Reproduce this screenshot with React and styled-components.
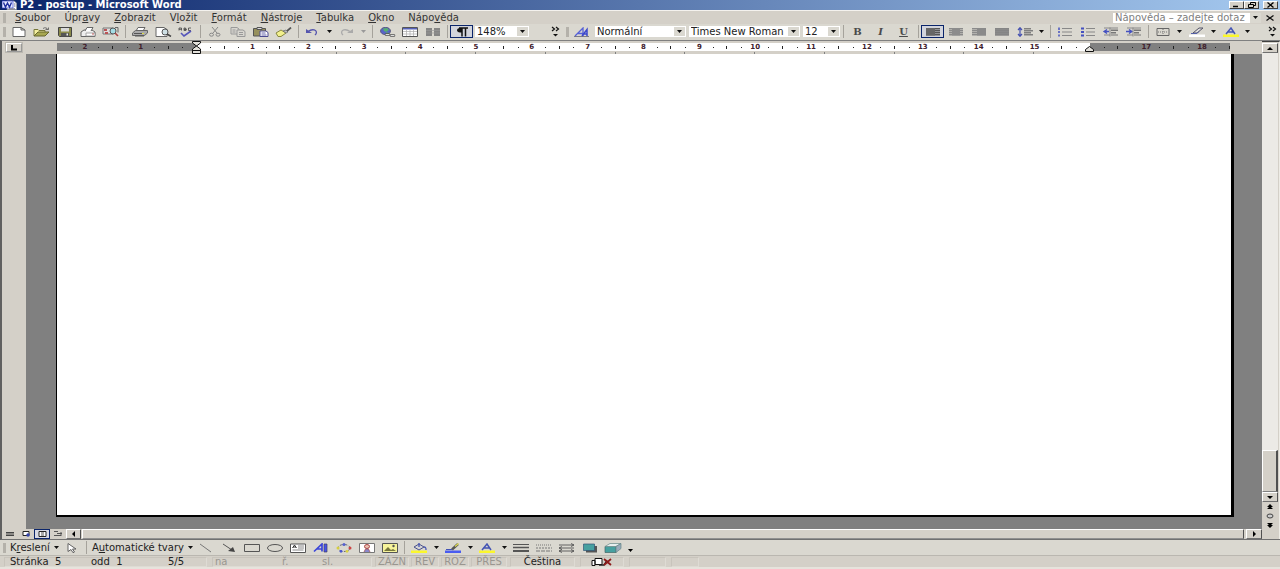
import React from "react";
import styled, { createGlobalStyle, css } from "styled-components";

const face = "#d4d0c8";
const light = "#f4f2ee";
const shade = "#808080";
const bar = "#dad8d0";

const GlobalStyle = createGlobalStyle`
  *, *::before, *::after { box-sizing: border-box; }
  body { margin: 0; background: ${face}; }
  body, button, input, select {
    font: 10px/12px "DejaVu Sans", Verdana, sans-serif;
    color: #222;
  }
  svg { display: block; flex: none; }
`;

const Window = styled.div`
  display: flex;
  flex-direction: column;
  min-height: 100vh;
  overflow: hidden;
`;

const Plain = styled.button`
  display: flex;
  align-items: center;
  justify-content: center;
  flex: none;
  margin: 0;
  padding: 0;
  border: 0;
  background: none;
  white-space: nowrap;
`;

/* Title bar */
const TitleBar = styled.header`
  display: flex;
  align-items: center;
  height: 10px;
  padding: 0 2px;
  background: linear-gradient(90deg, #0a246a, #a6caf0);
`;
const Title = styled.h1`
  margin: 0 auto 0 3px;
  font-size: 10px;
  line-height: 10px;
  font-weight: bold;
  color: #fff;
`;
const WindowButton = styled(Plain)`
  width: 15px;
  height: 8px;
  margin-left: ${(p) => (p.$apart ? 4 : 0)}px;
  background: ${face};
  border: 1px solid;
  border-color: #fff #404040 #404040 #fff;
`;

/* Menu */
const MenuBar = styled.nav`
  display: flex;
  align-items: center;
  height: 14px;
  padding: 0 2px 0 3px;
  border-top: 1px solid ${light};
`;
const Grip = styled.span`
  flex: none;
  width: 3px;
  height: 10px;
  background: #b4b1aa;
`;
const MenuItem = styled(Plain)`
  padding: 0 7px;
  color: #333;
  &:first-of-type { margin-left: 2px; }
`;
const HelpBox = styled.div`
  display: flex;
  align-items: center;
  width: 148px;
  height: 10px;
  margin-left: auto;
  background: #fff;
`;
const HelpInput = styled.input`
  flex: 1;
  min-width: 0;
  height: 10px;
  padding: 0 2px;
  border: 0;
  background: none;
  line-height: 10px;
  &::placeholder { color: #808080; opacity: 1; }
`;
const HelpArrow = styled(Plain)`
  width: 11px;
  height: 10px;
  background: ${bar};
`;
const CloseDocument = styled(Plain)`
  width: 17px;
  height: 12px;
`;

/* Toolbars */
const Toolbars = styled.div`
  display: flex;
  height: 16px;
  background: ${bar};
`;
const Toolbar = styled.div`
  display: flex;
  align-items: center;
  flex: ${(p) => (p.$fill ? 1 : "none")};
  min-width: 0;
  height: 15px;
  padding: 0 2px 0 3px;
  background: ${bar};
`;
const ToolButton = styled(Plain)`
  width: 23px;
  height: 13px;
  ${(p) => p.$pressed && css`
    border: 1px solid #0a246a;
    background: #d2d4dc;
  `}
  ${Grip} + & { margin-left: 1px; }
`;
const ArrowButton = styled(Plain)`
  width: 11px;
  height: 13px;
`;
const MoreButton = styled(Plain)`
  width: 12px;
  height: 14px;
  margin-left: ${(p) => (p.$end ? "auto" : "20px")};
`;
const TextButton = styled(Plain)`
  padding: 0 2px;
  gap: 4px;
  ${Grip} + & { margin-left: 2px; }
`;
const FontStyle = styled.span`
  font: 10px/12px "DejaVu Serif", serif;
  font-weight: bold;
  font-style: ${(p) => (p.$italic ? "italic" : "normal")};
  text-decoration: ${(p) => (p.$underline ? "underline" : "none")};
  color: #4a4a4a;
`;
const Separator = styled.span`
  flex: none;
  width: 6px;
  height: 13px;
  background: linear-gradient(#a5a29b, #a5a29b) center / 1px 100% no-repeat;
`;
const Combo = styled.div`
  position: relative;
  flex: none;
  width: ${(p) => p.$width}px;
  height: 11px;
  margin-left: ${(p) => (p.$first ? 2 : 3)}px;
  background: #fff;
`;
const ComboSelect = styled.select`
  display: block;
  width: 100%;
  height: 11px;
  padding: 0 0 0 2px;
  border: 0;
  background: none;
  appearance: none;
  line-height: 11px;
`;
const ComboArrow = styled.span`
  position: absolute;
  top: 1px;
  right: 1px;
  bottom: 1px;
  display: flex;
  align-items: center;
  justify-content: center;
  width: 11px;
  background: ${bar};
  pointer-events: none;
`;

/* Work area */
const WorkArea = styled.main`
  display: flex;
  flex: 1;
  border-top: 1px solid ${shade};
  border-left: 2px solid #606060;
  border-bottom: 1px solid #707070;
`;
const Editor = styled.div`
  display: flex;
  flex-direction: column;
  flex: 1;
  min-width: 0;
`;
const RulerRow = styled.div`
  display: flex;
  align-items: flex-start;
  height: 13px;
  padding: 2px 32px 0 4px;
`;
const TabButton = styled(Plain)`
  width: 16px;
  height: 9px;
  margin-right: 35px;
  border: 1px solid;
  border-color: #fff #999 #999 #fff;
  outline: 1px solid #bbb8b0;
`;
const Ruler = styled.div`
  position: relative;
  display: flex;
  flex: 1;
  height: 8px;
  background: linear-gradient(90deg, ${shade} 11.9%, #fff 11.9%, #fff 88.1%, ${shade} 88.1%);
  &::after {
    content: "";
    position: absolute;
    top: 9px;
    left: 11.9%;
    right: 11.9%;
    height: 2px;
    background: repeating-linear-gradient(90deg, transparent 0 calc(7.8125% - 1px), ${shade} calc(7.8125% - 1px) 7.8125%);
  }
`;
const RulerUnit = styled.span`
  flex: 1;
  min-width: 0;
  text-align: center;
  font-size: 7px;
  line-height: 8px;
  font-weight: bold;
  color: #40202c;
  background:
    linear-gradient(#222, #222) 25% 4px / 1px 1px no-repeat,
    linear-gradient(#222, #222) 75% 4px / 1px 1px no-repeat,
    linear-gradient(#222, #222) 100% 3px / 1px 3px no-repeat;
`;
const IndentMarker = styled.span`
  position: absolute;
  top: ${(p) => p.$top}px;
  left: ${(p) => p.$at}%;
  margin-left: -5px;
`;
const Canvas = styled.div`
  display: flex;
  flex: 1;
  background: ${shade};
`;
const SideRuler = styled.div`
  width: 24px;
  background: ${face};
`;
const Page = styled.article`
  flex: 1;
  margin: 0 28px 12px 30px;
  background: #fff;
  border: solid #000;
  border-width: 0 3px 2px 1px;
`;
const BottomRow = styled.div`
  display: flex;
  height: 10px;
  background: ${face};
`;
const ViewButton = styled(Plain)`
  width: 16px;
  height: 10px;
  ${(p) => p.$pressed && css`
    border: 1px solid #0a246a;
    background: #d8dae4;
  `}
`;
const ScrollButton = styled(Plain)`
  width: ${(p) => (p.$wide ? 16 : 15)}px;
  height: 10px;
  border: 1px solid;
  border-color: #fff #505050 #707070 #fff;
  background: ${face};
`;
const HorizontalThumb = styled.div`
  flex: 1;
  margin: 0 2px 0 1px;
  border: 1px solid;
  border-color: #fff #505050 #909090 #fff;
  background: ${face};
`;
const VerticalScroll = styled.aside`
  display: flex;
  flex-direction: column;
  flex: none;
  width: 18px;
  padding: 1px 1px 10px 0;
  border-right: 1px solid #eeece6;
  background: ${face};
  border-top: 1px solid #404040;
`;
const Track = styled.div`
  display: flex;
  flex: 1;
  background: #eceae6;
`;
const VerticalThumb = styled.div`
  align-self: flex-end;
  width: 100%;
  height: 42px;
  border: 1px solid;
  border-color: #fff #505050 #808080 #fff;
  border-right-width: 2px;
  background: ${face};
`;
const BrowseButton = styled(Plain)`
  width: 16px;
  height: 9px;
`;

/* Status bar */
const StatusBar = styled.footer`
  display: flex;
  align-items: center;
  height: 14px;
  padding: 0 4px;
  border-top: 1px solid #bab7b0;
  border-bottom: 2px solid #e6e3dc;
`;
const StatusField = styled.div`
  display: flex;
  align-items: center;
  justify-content: ${(p) => (p.$start ? "flex-start" : "center")};
  flex: none;
  width: ${(p) => p.$width}px;
  height: 10px;
  margin-right: ${(p) => p.$after || 2}px;
  padding-left: ${(p) => p.$start || 0}px;
  border: 1px solid;
  border-color: #c8c4bc #dedbd4 #dedbd4 #c8c4bc;
  color: ${(p) => (p.$off ? "#999690" : "#222")};
  white-space: pre;
`;
const StatusPart = styled.span`
  flex: none;
  width: ${(p) => p.$width}px;
`;

const Caret = ({ color = "#111" }) => (
  <svg width="5" height="3" viewBox="0 0 5 3"><path d="M0 0h5L2.5 3z" fill={color} /></svg>
);
const Point = ({ d }) => (
  <svg width="8" height="6" viewBox="0 0 8 6"><path d={d} fill="#000" /></svg>
);
const More = () => (
  <svg width="9" height="11" viewBox="0 0 9 11">
    <path d="M1 1l2.5 2L1 5M5 1l2.5 2L5 5" fill="none" stroke="#111" strokeWidth="1.2" />
    <path d="M2 8h5L4.500 10.500z" fill="#111" />
  </svg>
);

const g = "#666";
const rows = (color, list) => (
  <g fill={color}>{list.map(([x, w], i) => <rect key={i} x={x} y={1 + i * 2} width={w} height="1.5" />)}</g>
);

const art = {
  new: <path d="M3 .5h8l4 2.500v6.500H3zM11 .5V3h4" fill="#fff" stroke={g} />,
  open: <><path d="M1 9V2.500h4l1 1h6V5" fill="#f4f0a0" stroke="#77773a" /><path d="M1 9l4-4h11l-4 4z" fill="#a8a850" stroke="#66662c" /><path d="M10 1.500c2-1.500 4-.5 5 1m.5-2v2h-3" fill="none" stroke="#555" strokeWidth=".8" /></>,
  save: <><path d="M2.500.5h13v9h-12l-1-1z" fill="#8a8a4a" stroke="#444" /><path d="M5 1h8v3.500H5z" fill="#d9d9d9" /><path d="M5 6h8v3.500H5z" fill="#555" /><path d="M10.500 6.500h1.500v2h-1.500z" fill="#eee" /></>,
  mail: <><path d="M2 5l3-2h8l3 2v4.500H2z" fill="#eee" stroke={g} /><path d="M6 4l2-3.500h6L12 4" fill="#fff" stroke={g} /><path d="M7 6h9v3H7z" fill="#fff" stroke="#888" strokeWidth=".7" /><circle cx="14" cy="7" r=".8" fill="#b44" /></>,
  search: <><path d="M1 1h10v6H1z" fill="#ddd" stroke="#777" /><path d="M2 2h3v2H2zM3 5h3v2H3z" fill="#b55" /><circle cx="11" cy="4" r="3" fill="#a4dce4" stroke="#555" /><path d="M13 6l3 3" stroke="#a44" strokeWidth="1.6" /><path d="M13 .5h3v5" fill="none" stroke="#666" /></>,
  print: <><path d="M5 4l2-3.500h7L12 4" fill="#fff" stroke="#666" /><path d="M1.500 6l3-2.500h12V6l-3 2.500h-12z" fill="#aaa" stroke="#666" /><path d="M3 6.500h10M4 9h9" stroke="#555" /><path d="M11 6.500h2" stroke="#dd4" /></>,
  preview: <><path d="M2 .5h8l3 2v7H2z" fill="#fff" stroke={g} /><circle cx="11" cy="5" r="3" fill="#cfe0e4" stroke="#555" /><path d="M13 7l4 2.500" stroke="#444" strokeWidth="1.5" /></>,
  spell: <><path d="M2 3.500V1h2.500v2.500M2 2.300h2.500M7 1v2.500h2L9.500 2.300H7 9L8.500 1zM14 1h-2.500v2.500H14" fill="none" stroke="#444" strokeWidth=".8" /><path d="M4 6l3 3 7-5" fill="none" stroke="#5555bb" strokeWidth="1.6" /></>,
  cut: <><path d="M6 0l5 6M12 0L7 6" stroke="#888" fill="none" /><ellipse cx="5.500" cy="7.700" rx="2" ry="1.500" fill="none" stroke="#888" /><ellipse cx="12" cy="7.700" rx="2" ry="1.500" fill="none" stroke="#888" /></>,
  copy: <><path d="M2 .5h6l2 1.500v5H2z" fill="#d8d6d0" stroke="#999" /><path d="M8 3h6l2 1.500v5H8z" fill="#d8d6d0" stroke="#999" /><path d="M3.500 3h3M3.500 5h3M10 5.500h4M10 7.500h4" stroke="#999" /></>,
  paste: <><path d="M1.500 1.500h12v7.500h-12z" fill="#96905c" stroke="#555" /><path d="M5 .5h5v2H5z" fill="#ddd" stroke="#555" /><path d="M8 4h6l2 1.500v4H8z" fill="#fff" stroke="#4a4a90" /><path d="M9.500 6h4M9.500 8h5" stroke="#66a" /></>,
  brush: <><path d="M1 6l5-3 5 3-5 3.500H3z" fill="#f2f08c" stroke="#888840" /><path d="M8 4l3-1 2 2-2 1z" fill="#bbb" stroke="#666" strokeWidth=".7" /><path d="M12 4l4-3.500" stroke="#555" strokeWidth="1.700" /></>,
  undo: <><path d="M4 4.500c4-3 10-2 8 2.500l-1 1" fill="none" stroke="#5555ae" strokeWidth="1.300" /><path d="M2 2v4h6z" fill="#5555ae" /></>,
  redo: <><path d="M12 4.500C8 1.500 2 2.500 4 7l1 1" fill="none" stroke="#aaa" strokeWidth="1.300" /><path d="M15 2v4H9z" fill="#aaa" /></>,
  link: <><ellipse cx="7.500" cy="4" rx="5" ry="3.700" fill="#5a64c8" stroke="#446" strokeWidth=".7" /><path d="M5 1.500l4-.5 2 2-3 2-2-1zM8 5l3 1-2 1.500z" fill="#58b070" /><path d="M8 7.500h3M13 8.500h3" stroke="#555" strokeWidth="2.600" strokeLinecap="round" /><path d="M8 7.500h3M13 8.500h3" stroke="#ddd" strokeLinecap="round" /></>,
  table: <><path d="M1.500.5h15v9h-15z" fill="#fff" stroke="#555" /><path d="M2 1h14v1.500H2z" fill="#5560b8" /><path d="M2 4.500h14M2 7h14M5.500 3v6M9 3v6M12.500 3v6" stroke="#aaa" strokeWidth=".7" /></>,
  columns: <><path d="M2 1h6v8H2zM10 1h6v8h-6z" fill="#858585" /><path d="M2 3.500h14M2 6h14" stroke="#999" strokeWidth=".7" /></>,
  pilcrow: <><path d="M9 1H7C3 1 3 5.500 7 5.500h2z" fill="#111" /><path d="M6 1h9M9 1v8.500M12.500 1v8.500" fill="none" stroke="#111" strokeWidth="1.500" /></>,
  styles: <><path d="M2 9l8-8v8M5 6.500h5" fill="none" stroke="#5560d8" strokeWidth="1.300" /><path d="M9 9l5-6.500V9M11 7h3" fill="none" stroke="#3c48cc" strokeWidth="1.500" /><path d="M1 9.500h15" stroke="#556" strokeWidth=".7" /></>,
  left: <>{rows("#555", [[2, 14], [2, 14], [2, 14], [2, 14]])}<path d="M2 1h9v7.500H2z" fill="#666" /></>,
  center: <>{rows("#8a8a8a", [[2, 14], [2, 14], [2, 14], [2, 14]])}<path d="M5 1h8v7.500H5z" fill="#8c8c8c" /></>,
  right: <>{rows("#8a8a8a", [[2, 14], [2, 14], [2, 14], [2, 14]])}<path d="M7 1h9v7.500H7z" fill="#8a8a8a" /></>,
  justify: <><path d="M2 1h14v7.500H2z" fill="#8f8f8f" />{rows("#858585", [[2, 14], [2, 14], [2, 14], [2, 14]])}</>,
  spacing: <><path d="M4 1v8M2 3l2-2.300L6 3M2 7l2 2.300L6 7" fill="none" stroke="#4450b0" strokeWidth="1.200" />{rows("#808080", [[8, 7], [8, 9], [8, 7], [8, 9]])}</>,
  numbers: <><path d="M3 .5v2.500M3 4v2M3 7.500v2" stroke="#4450c0" strokeWidth="1.500" /><path d="M6 1.500h10M6 5h10M6 8.500h10" stroke="#888" /></>,
  bullets: <><path d="M2 1.500h3M2 5h3M2 8.500h3" stroke="#4450c0" strokeWidth="1.800" /><path d="M7 1.500h9M7 5h9M7 8.500h9" stroke="#888" /></>,
  outdent: <><path d="M2 4.500h5M5 2.500l-3 2 3 2" fill="none" stroke="#4450c0" strokeWidth="1.300" /><path d="M8 .5v9M2 1h14M2 8h6" stroke="#888" fill="none" /><path d="M9 2.500h7v1.500H9zM9 5h5v1.500H9zM9 7.500h7v1H9z" fill="#777" /></>,
  indent: <><path d="M1 4.500h5M4 2.500l3 2-3 2" fill="none" stroke="#4450c0" strokeWidth="1.300" /><path d="M8 .5v9M2 1h14M2 8h6" stroke="#888" fill="none" /><path d="M9 2.500h7v1.500H9zM9 5h5v1.500H9zM9 7.500h7v1H9z" fill="#777" /></>,
  border: <><path d="M3 1.500h12v7H3z" fill="none" stroke="#666" /><path d="M9 2v6M4 5h10" stroke="#777" strokeDasharray="1 1" /></>,
  highlight: <><path d="M1 7.500h16v2.500H1z" fill="#fff" /><path d="M5 6l6-5h4l-6 5z" fill="#ddd" stroke="#556" /><path d="M3 6.500h6l2-2" stroke="#5560a8" fill="none" /></>,
  fontColor: <><path d="M1 7.500h16v2.500H1z" fill="#fbf72c" /><path d="M4 7l5-6 4 6M6 5h6" fill="none" stroke="#4454b4" strokeWidth="1.500" /></>,
  cursor: <path d="M5 .5v8l3-2 2 3.200 1.500-.7-2-3H13z" fill="#fff" stroke="#555" strokeWidth=".9" />,
  line: <path d="M3 1l11 8" stroke="#777" />,
  arrow: <><path d="M3 1l9 6" stroke="#555" /><path d="M15 9L8 8l5-4z" fill="#444" /></>,
  rect: <path d="M1.500 1.500h15v7h-15z" fill="none" stroke="#555" />,
  oval: <ellipse cx="9" cy="5" rx="7.500" ry="3.500" fill="none" stroke="#555" />,
  textbox: <><path d="M1.500 1h15v8.500h-15z" fill="#fff" stroke="#555" /><path d="M3.500 5l2-3 2 3M4 4h3" fill="none" stroke="#333" /><path d="M9 3h6M9 5h6M3.500 7h11" stroke="#888" /></>,
  wordart: <><path d="M2 8.500L10 1v7.500M5 6h5" fill="none" stroke="#3c46d8" strokeWidth="1.700" /><path d="M12 1h3v8h-3z" fill="#4854ea" stroke="#446" strokeWidth=".7" /></>,
  diagram: <><ellipse cx="9" cy="5" rx="6" ry="3.500" fill="none" stroke="#667" strokeDasharray="3 1.500" /><circle cx="9" cy="1.500" r="1.500" fill="#5560d0" /><circle cx="3" cy="5" r="1.500" fill="#d6cf40" /><circle cx="15" cy="5" r="1.500" fill="#c44" /><circle cx="6" cy="8.300" r="1.400" fill="#4854d0" /><circle cx="12" cy="8.300" r="1.400" fill="#dbd340" /></>,
  clipart: <><path d="M1.500.5h15v9h-15z" fill="#fff" stroke="#777" /><ellipse cx="9" cy="3.500" rx="2.500" ry="2" fill="#ecc0b0" stroke="#a44" /><path d="M6 9l1.500-3h3L12 9" fill="#88c" stroke="#a55" strokeWidth=".8" /></>,
  picture: <><path d="M1.500.5h15v9h-15z" fill="#f6f39a" stroke="#555" /><path d="M3 8l4-4 3 3 2-1 3 2z" fill="#77773c" /><circle cx="12.500" cy="3" r="1.200" fill="#555" /></>,
  fill: <><path d="M1 7.500h16v2.500H1z" fill="#fbf72c" /><path d="M4 4l5-3 5 3-5 3z" fill="#d4d4d4" stroke="#4a528c" /><path d="M9 0v4M14 4c2 0 2 1 2 3" fill="none" stroke="#4454b4" strokeWidth="1.300" /></>,
  stroke: <><path d="M1 7.500h16v2.500H1z" fill="#4a5cf0" /><path d="M8 6.500l6-5.500" stroke="#555" strokeWidth="2.400" /><path d="M11 3.500L14.500.5" stroke="#e0dc50" strokeWidth="1.200" /><path d="M2 6.500h6" stroke="#4454b4" /></>,
  weight: <><path d="M1 1.500h16" stroke="#555" /><path d="M1 4.500h16" stroke="#555" strokeWidth="1.500" /><path d="M1 8h16" stroke="#555" strokeWidth="2" /></>,
  dash: <><path d="M1 2h16" stroke="#777" strokeDasharray="1 1" /><path d="M1 5h16" stroke="#777" strokeDasharray="2 1" /><path d="M1 8h16" stroke="#777" strokeDasharray="4 1" /></>,
  arrows: <path d="M1 2h15M13 .5L16 2l-3 1.500M1 5h15M4 3.500L1 5l3 1.500M1 8h15M4 6.500L1 8l3 1.500M13 6.500L16 8l-3 1.500" fill="none" stroke="#555" strokeWidth=".9" />,
  shadow: <><path d="M5 3h11v6.500H5z" fill="#555" /><path d="M2.500 1h11v6.500h-11z" fill="#46a0a0" stroke="#357" strokeWidth=".7" /></>,
  cube: <><path d="M1 3.500h11v6H1z" fill="#46a0a0" stroke="#466" strokeWidth=".7" /><path d="M1 3.500L6 .5h11l-5 3z" fill="#e6eeee" stroke="#688" strokeWidth=".7" /><path d="M12 3.500l5-3v5l-5 4z" fill="#9ab" stroke="#688" strokeWidth=".7" /></>,
};

const Icon = ({ name }) => (
  <svg width="18" height="10" viewBox="0 0 18 10" aria-hidden="true">{art[name]}</svg>
);

const Tools = ({ items }) => items.map(([name, label, kind], i) => {
  if (name === "|") return <Separator key={i} />;
  return (
    <React.Fragment key={i}>
      <ToolButton aria-label={label} aria-pressed={kind === "on" || undefined} $pressed={kind === "on"}>
        {art[name] ? <Icon name={name} /> : <FontStyle $italic={name === "I"} $underline={name === "U"}>{name}</FontStyle>}
      </ToolButton>
      {(kind === "menu" || kind === "off") && (
        <ArrowButton aria-label={`${label} – možnosti`}><Caret color={kind === "off" ? "#999" : "#111"} /></ArrowButton>
      )}
    </React.Fragment>
  );
});

const Box = ({ label, value, width, first }) => (
  <Combo $width={width} $first={first}>
    <ComboSelect aria-label={label} defaultValue={value}><option>{value}</option></ComboSelect>
    <ComboArrow><Caret /></ComboArrow>
  </Combo>
);

const sep = ["|"];
const standard = [
  ["new", "Nový"], ["open", "Otevřít"], ["save", "Uložit"], ["mail", "E-mail"], ["search", "Hledat"], sep,
  ["print", "Tisk"], ["preview", "Náhled"], ["spell", "Pravopis"], sep,
  ["cut", "Vyjmout"], ["copy", "Kopírovat"], ["paste", "Vložit"], ["brush", "Kopírovat formát"], sep,
  ["undo", "Zpět", "menu"], ["redo", "Znovu", "off"], sep,
  ["link", "Odkaz"], ["table", "Vložit tabulku"], ["columns", "Sloupce"], sep,
  ["pilcrow", "Zobrazit vše", "on"],
];
const formatting = [
  sep, ["B", "Tučné"], ["I", "Kurzíva"], ["U", "Podtržené"], sep,
  ["left", "Vlevo", "on"], ["center", "Na střed"], ["right", "Vpravo"], ["justify", "Do bloku"],
  ["spacing", "Řádkování", "menu"], sep,
  ["numbers", "Číslování"], ["bullets", "Odrážky"], ["outdent", "Zmenšit odsazení"], ["indent", "Zvětšit odsazení"], sep,
  ["border", "Ohraničení", "menu"], ["highlight", "Zvýraznění", "menu"], ["fontColor", "Barva písma", "menu"],
];
const drawing = [
  ["line", "Čára"], ["arrow", "Šipka"], ["rect", "Obdélník"], ["oval", "Ovál"], ["textbox", "Textové pole"],
  ["wordart", "WordArt"], ["diagram", "Diagram"], ["clipart", "Klipart"], ["picture", "Obrázek"], sep,
  ["fill", "Barva výplně", "menu"], ["stroke", "Barva čáry", "menu"], ["fontColor", "Barva písma", "menu"],
  ["weight", "Styl čáry"], ["dash", "Styl přerušované čáry"], ["arrows", "Styl šipky"], ["shadow", "Stín"], ["cube", "Prostorový vzhled"],
];
const menus = [
  ["", "S", "oubor"], ["Úpr", "a", "vy"], ["", "Z", "obrazit"], ["V", "l", "ožit"], ["", "F", "ormát"],
  ["", "N", "ástroje"], ["", "T", "abulka"], ["", "O", "kno"], ["Nápo", "v", "ěda"],
];
const units = Array.from({ length: 21 }, (_, i) => i - 2);

export default function App() {
  return (
    <Window>
      <GlobalStyle />
      <TitleBar>
        <svg width="15" height="10" viewBox="0 0 15 10">
          <path d="M5 1h7l2.500 2v6.500H5z" fill="#fff" stroke="#999" strokeWidth=".7" />
          <path d="M0 1h11v7H0z" fill="#e8ebff" stroke="#34c" strokeWidth=".7" />
          <path d="M1.500 2.500L3.500 7l2-4 2 4 2-4.500" fill="none" stroke="#2030a0" strokeWidth="1.400" />
          <path d="M12 4h1.500M12 6h1.500M7 8.800h6" stroke="#778" />
        </svg>
        <Title>P2 - postup - Microsoft Word</Title>
        <WindowButton aria-label="Minimalizovat"><svg width="11" height="6"><path d="M2 4.500h5" stroke="#000" strokeWidth="1.500" /></svg></WindowButton>
        <WindowButton aria-label="Obnovit"><svg width="11" height="6"><path d="M4.500 2.500v-2h5v3h-2M2.500 2.500h5v3h-5z" fill="none" stroke="#000" /></svg></WindowButton>
        <WindowButton $apart aria-label="Zavřít"><svg width="11" height="6"><path d="M2.500.5l6 5M8.500.5l-6 5" stroke="#000" strokeWidth="1.300" /></svg></WindowButton>
      </TitleBar>

      <MenuBar>
        <Grip />
        {menus.map(([a, key, b]) => <MenuItem key={a + key + b}><span>{a}<u>{key}</u>{b}</span></MenuItem>)}
        <HelpBox>
          <HelpInput aria-label="Nápověda" placeholder="Nápověda – zadejte dotaz" />
          <HelpArrow aria-label="Předchozí dotazy"><Caret /></HelpArrow>
        </HelpBox>
        <CloseDocument aria-label="Zavřít dokument">
          <svg width="8" height="6"><path d="M.5.5l7 5M7.500.5l-7 5" stroke="#111" strokeWidth="1.300" /></svg>
        </CloseDocument>
      </MenuBar>

      <Toolbars>
        <Toolbar>
          <Grip />
          <Tools items={standard} />
          <Box label="Lupa" value="148%" width={54} first />
          <MoreButton aria-label="Další tlačítka"><More /></MoreButton>
        </Toolbar>
        <Toolbar $fill>
          <Grip />
          <Tools items={[["styles", "Styly a formátování"]]} />
          <Box label="Styl" value="Normální" width={91} first />
          <Box label="Písmo" value="Times New Roman" width={111} />
          <Box label="Velikost písma" value="12" width={37} />
          <Tools items={formatting} />
          <MoreButton $end aria-label="Další tlačítka"><More /></MoreButton>
        </Toolbar>
      </Toolbars>

      <WorkArea>
        <Editor>
          <RulerRow>
            <TabButton aria-label="Zarážka tabulátoru">
              <svg width="8" height="6"><path d="M2 0v4.500h5" fill="none" stroke="#000" strokeWidth="2" /></svg>
            </TabButton>
            <Ruler>
              {units.map((n) => <RulerUnit key={n}>{n === 0 || n === 16 ? "" : Math.abs(n)}</RulerUnit>)}
              <IndentMarker $at={11.9} $top={-2}>
                <svg width="10" height="13" viewBox="0 0 10 13"><path d="M.5.5h8v1.500L4.500 5 .5 2zM4.500 5l4 3v1.500h-8V8zM.5 9.500h8v3h-8z" fill="#e4e2dc" stroke="#111" /></svg>
              </IndentMarker>
              <IndentMarker $at={88.1} $top={3}>
                <svg width="10" height="6" viewBox="0 0 10 6"><path d="M.5 5.500V3.500l4-3 4 3v2z" fill="#e4e2dc" stroke="#111" /></svg>
              </IndentMarker>
            </Ruler>
          </RulerRow>
          <Canvas>
            <SideRuler />
            <Page aria-label="Dokument" />
          </Canvas>
          <BottomRow>
            <ViewButton aria-label="Normální zobrazení"><svg width="9" height="6"><path d="M0 1.500h8M0 3h8M0 4.500h8" stroke="#444" /></svg></ViewButton>
            <ViewButton aria-label="Rozložení webové stránky"><svg width="9" height="6"><path d="M1 .5h6v4H1z" fill="#fff" stroke="#222" /><circle cx="6" cy="4" r="1.700" fill="#34a" /></svg></ViewButton>
            <ViewButton $pressed aria-label="Rozložení při tisku"><svg width="9" height="6"><path d="M1 .5h7v5H1z" fill="#fff" stroke="#222" /><path d="M3 2h3M3 4h3" stroke="#555" /></svg></ViewButton>
            <ViewButton aria-label="Osnova"><svg width="9" height="6"><path d="M0 .5h4M3 2.500h5M0 4.500h7M7 1v4" stroke="#555" fill="none" /></svg></ViewButton>
            <ScrollButton aria-label="Posunout vlevo"><Point d="M5 0v6L2 3z" /></ScrollButton>
            <HorizontalThumb />
            <ScrollButton $wide aria-label="Posunout vpravo"><Point d="M3 0v6l3-3z" /></ScrollButton>
          </BottomRow>
        </Editor>
        <VerticalScroll>
          <ScrollButton $wide aria-label="Posunout nahoru"><Point d="M1 5h6L4 2z" /></ScrollButton>
          <Track><VerticalThumb /></Track>
          <ScrollButton $wide aria-label="Posunout dolů"><Point d="M1 2h6L4 5z" /></ScrollButton>
          <BrowseButton aria-label="Předchozí"><Point d="M1 3l3-3 3 3zM1 5l3-3 3 3z" /></BrowseButton>
          <BrowseButton aria-label="Vybrat objekt"><svg width="8" height="6"><ellipse cx="4" cy="3" rx="3" ry="2" fill="#ccc" stroke="#444" /></svg></BrowseButton>
          <BrowseButton aria-label="Další"><Point d="M1 1h6L4 4zM1 3h6L4 6z" /></BrowseButton>
        </VerticalScroll>
      </WorkArea>

      <Toolbar>
        <Grip />
        <TextButton><span>K<u>r</u>eslení</span><Caret /></TextButton>
        <Tools items={[["cursor", "Vybrat objekty"], sep]} />
        <TextButton><span>A<u>u</u>tomatické tvary</span><Caret /></TextButton>
        <Tools items={drawing} />
        <ArrowButton aria-label="Možnosti panelu"><svg width="5" height="9"><path d="M0 6h5L2.500 9z" /></svg></ArrowButton>
      </Toolbar>

      <StatusBar>
        <StatusField $width={203} $start={5} $after={5}>
          <StatusPart $width={81}>Stránka  5</StatusPart>
          <StatusPart $width={77}>odd  1</StatusPart>
          <span>5/5</span>
        </StatusField>
        <StatusField $width={160} $start={2} $after={3} $off>
          <StatusPart $width={67}>na</StatusPart>
          <StatusPart $width={40}>ř.</StatusPart>
          <span>sl.</span>
        </StatusField>
        <StatusField $width={34} $off>ZÁZN</StatusField>
        <StatusField $width={28} $off>REV</StatusField>
        <StatusField $width={28} $off>ROZ</StatusField>
        <StatusField $width={36} $after={3} $off>PŘES</StatusField>
        <StatusField $width={65} $after={5}>Čeština</StatusField>
        <StatusField $width={44} $after={5}>
          <svg width="22" height="8" viewBox="0 0 22 8">
            <path d="M1 2.500h3v5h-3zM4 .5h7v6H4z" fill="#fff" stroke="#111" />
            <path d="M8 7h5l3-5" stroke="#222" fill="none" strokeWidth="1.300" />
            <path d="M13 1l7 6M20 1l-7 6" stroke="#8c1a1a" strokeWidth="1.800" />
          </svg>
        </StatusField>
        <StatusField $width={37} $after={5} />
        <StatusField $width={28} />
      </StatusBar>
    </Window>
  );
}
